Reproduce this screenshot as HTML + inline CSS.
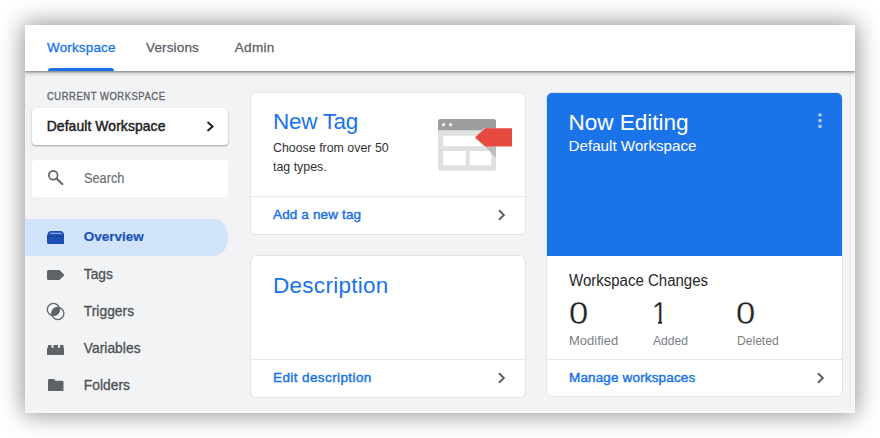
<!DOCTYPE html>
<html><head><meta charset="utf-8">
<style>
*{box-sizing:border-box;margin:0;padding:0}
html,body{width:880px;height:438px;background:#fff;overflow:hidden}
body{font-family:"Liberation Sans",sans-serif;position:relative}
#app{position:absolute;left:25px;top:25px;width:830px;height:388px;background:#f1f3f4;box-shadow:0 0 22px 2px rgba(0,0,0,.42);overflow:hidden}
#top{position:absolute;left:0;top:0;width:830px;height:45.5px;background:#fff;box-shadow:0 1px 2px rgba(0,0,0,.4),0 2px 6px rgba(0,0,0,.2);z-index:5}
.tab{position:absolute;top:15px;font-size:13.5px;color:#5f6368;letter-spacing:.15px;-webkit-text-stroke:.3px currentColor}
.tab.on{color:#1a73e8}
#ul{position:absolute;left:23px;top:42.900px;width:66px;height:2.900px;background:#1a73e8;border-radius:3px 3px 0 0}
.abs{position:absolute}
.card{position:absolute;background:#fff;border-radius:6px;border:1px solid #e2e3e4}
.lbl{position:absolute;left:22px;top:64.800px;font-size:10.5px;color:#5f6368;letter-spacing:.6px;-webkit-text-stroke:.3px currentColor;white-space:nowrap;transform:scaleX(.9);transform-origin:0 0}
#ws{position:absolute;left:7px;top:83px;width:196px;height:37px;background:#fff;border-radius:4px;box-shadow:0 1px 2px rgba(0,0,0,.35)}
#ws span{position:absolute;left:14.700px;top:9.5px;letter-spacing:.1px;font-size:13.9px;color:#202124;-webkit-text-stroke:.45px currentColor;white-space:nowrap}
#search{position:absolute;left:7px;top:135px;width:196px;height:37px;background:#fff;border-radius:4px}
#search span{position:absolute;left:51.500px;top:10px;font-size:14px;color:#6b6f73;transform:scaleX(.91);transform-origin:0 0;-webkit-text-stroke:.2px currentColor}
#sel{position:absolute;left:0;top:193.700px;width:203.200px;height:37px;background:#d2e3fc;border-radius:0 14px 14px 0 / 0 18.500px 18.500px 0}
.nav{position:absolute;left:58.700px;font-size:13.800px;color:#4d5155;-webkit-text-stroke:.3px currentColor;letter-spacing:.05px}
.nav.on{color:#1b55b8;font-weight:bold;font-size:13.5px;-webkit-text-stroke:.2px currentColor;letter-spacing:0}
.h{position:absolute;font-size:22.500px;color:#1a73e8;letter-spacing:-.3px;white-space:nowrap}
.link{position:absolute;font-size:13.5px;color:#1a73e8;-webkit-text-stroke:.45px currentColor;letter-spacing:.15px;white-space:nowrap}
.sep{position:absolute;left:0;right:0;height:1px;background:#e5e6e7}
.num{position:absolute;top:201.500px;font-size:31.500px;color:#202124;transform-origin:0 0;-webkit-text-stroke:.3px #fff}
.z{transform:scaleX(1.1)}
.sm{position:absolute;top:240.300px;transform-origin:0 0;font-size:13px;color:#7b8085}
</style></head><body>
<div id="app">
  <div id="top">
    <div class="tab on" style="left:22px">Workspace</div>
    <div class="tab" style="left:121px">Versions</div>
    <div class="tab" style="left:209.700px;letter-spacing:.35px">Admin</div>
    <div id="ul"></div>
  </div>
  <div class="abs" style="left:824.500px;top:46px;width:5.500px;height:342px;background:#f5f6f7;border-left:1px solid #eaebec"></div>
  <div class="abs" style="left:0;top:385.500px;width:830px;height:2.500px;background:#f5f6f6"></div>
  <div class="lbl">CURRENT WORKSPACE</div>
  <div id="ws"><span>Default Workspace</span>
    <svg class="abs" style="left:172.500px;top:12px" width="10" height="13" viewBox="0 0 10 13"><path d="M2.5 2 L7.5 6.5 L2.5 11" fill="none" stroke="#202124" stroke-width="2"/></svg>
  </div>
  <div id="search"><span>Search</span>
    <svg class="abs" style="left:15px;top:9px" width="18" height="18" viewBox="0 0 18 18"><circle cx="6.200" cy="6.300" r="4.400" fill="none" stroke="#5f6368" stroke-width="1.700"/><path d="M9.500 9.500 L16 15.800" stroke="#5f6368" stroke-width="1.900"/></svg>
  </div>
  <div id="sel"></div>
  <div class="nav on" style="top:203.800px">Overview</div>
  <div class="nav" style="top:242px">Tags</div>
  <div class="nav" style="top:279px">Triggers</div>
  <div class="nav" style="top:316px">Variables</div>
  <div class="nav" style="top:353px">Folders</div>
  <!-- icons -->
  <svg class="abs" style="left:21.800px;top:206px" width="17.500" height="13" viewBox="0 0 17.500 13"><path d="M3.500 0h10.500a2.500 2.500 0 0 1 2.300 1.600l1.200 3V11.500a1.500 1.500 0 0 1-1.500 1.500H1.500A1.500 1.500 0 0 1 0 11.500V4.600l1.200-3A2.500 2.500 0 0 1 3.500 0z" fill="#1b4fb3"/><path d="M3.500 2.300h10.500" stroke="#a9c4f5" stroke-width="1" stroke-linecap="round"/><path d="M0.500 5.400h16.500" stroke="#153f94" stroke-width="1"/></svg>
  <svg class="abs" style="left:21.500px;top:245px" width="17.500" height="10" viewBox="0 0 17.500 10"><path d="M1.500 0h11l5 5-5 5H1.500A1.500 1.500 0 0 1 0 8.500V1.500A1.500 1.500 0 0 1 1.500 0z" fill="#5f6368"/></svg>
  <svg class="abs" style="left:21px;top:277px" width="20" height="20" viewBox="0 0 20 20"><defs><clipPath id="c1"><circle cx="7.400" cy="7.500" r="6.100"/></clipPath></defs><circle cx="7.400" cy="7.500" r="6.100" fill="none" stroke="#5f6368" stroke-width="1.300"/><circle cx="11.800" cy="11.500" r="6.100" fill="none" stroke="#5f6368" stroke-width="1.300"/><circle cx="11.800" cy="11.500" r="6.100" fill="#5f6368" clip-path="url(#c1)"/></svg>
  <svg class="abs" style="left:21.800px;top:319.600px" width="17.500" height="10" viewBox="0 0 17.500 10"><path d="M0 10V2.800h1V0h3.500v2.800h2V0h4.500v2.800h2V0h3.500v2.800h1V10z" fill="#5f6368"/></svg>
  <svg class="abs" style="left:23.100px;top:354.300px" width="15.500" height="12.200" viewBox="0 0 15.500 12.200"><path d="M1.200 0h4.800l1.500 1.800h6.800A1.200 1.200 0 0 1 15.500 3v8a1.200 1.200 0 0 1-1.200 1.200H1.200A1.200 1.200 0 0 1 0 11V1.200A1.200 1.200 0 0 1 1.200 0z" fill="#5f6368"/></svg>

  <!-- New tag card -->
  <div class="card" style="left:224.500px;top:67px;width:276px;height:143px">
    <div class="h" style="left:22.500px;top:16px">New Tag</div>
    <div class="abs" style="left:22.500px;top:46px;font-size:12.400px;line-height:18.600px;color:#303336;white-space:nowrap">Choose from over 50<br>tag types.</div>
    <svg class="abs" style="left:187.300px;top:25.800px" width="76" height="54" viewBox="0 0 76 54">
      <rect x="0" y="0" width="58" height="51.800" rx="2.500" fill="#e0e0e0"/>
      <path d="M2.500 0h53a2.500 2.500 0 0 1 2.500 2.500v8.700H0V2.500a2.500 2.500 0 0 1 2.500-2.500z" fill="#9e9e9e"/>
      <circle cx="5.600" cy="5.700" r="1.700" fill="#f2f2f2"/><circle cx="12.600" cy="5.700" r="1.700" fill="#f2f2f2"/>
      <rect x="5.300" y="16.800" width="47.900" height="10.400" fill="#fff"/>
      <rect x="5.300" y="32" width="22.400" height="14.300" fill="#fff"/><rect x="31.700" y="32" width="21.500" height="14.300" fill="#fff"/>
      <path d="M47 27.600 L58 27.600 L58 39 z" fill="#bdbdbd"/>
      <path d="M46 9.300 L58 9.300 L58 27.600 L46 27.600 L36.500 18.400z" fill="#d4d4d4"/>
      <path d="M47.500 9.300 L74 9.300 L74 27.600 L47.500 27.600 L38.200 19.600 Q37 18.450 38.200 17.300z" fill="#e5493f"/>
    </svg>
    <div class="sep" style="top:103px"></div>
    <div class="link" style="left:22.500px;top:113.500px">Add a new tag</div>
    <svg class="abs" style="left:246.500px;top:115.500px" width="9" height="12" viewBox="0 0 9 12"><path d="M2 1.300 L6.800 6 L2 10.700" fill="none" stroke="#5f6368" stroke-width="2"/></svg>
  </div>
  <!-- Description card -->
  <div class="card" style="left:224.500px;top:230px;width:276px;height:142.600px">
    <div class="h" style="left:22.500px;top:16.800px;letter-spacing:.28px">Description</div>
    <div class="sep" style="top:103px"></div>
    <div class="link" style="left:22.500px;top:113.500px;letter-spacing:.4px">Edit description</div>
    <svg class="abs" style="left:246.500px;top:115.500px" width="9" height="12" viewBox="0 0 9 12"><path d="M2 1.300 L6.800 6 L2 10.700" fill="none" stroke="#5f6368" stroke-width="2"/></svg>
  </div>
  <!-- Now editing -->
  <div class="card" style="left:521px;top:67px;width:297px;height:305px;overflow:hidden">
    <div class="abs" style="left:-1px;top:-1px;width:297px;height:163.500px;background:#1a73e8"></div>
    <div class="abs" style="left:21.500px;top:17px;font-size:22.600px;color:#fff;letter-spacing:-.05px;white-space:nowrap">Now Editing</div>
    <div class="abs" style="left:21.500px;top:44.200px;font-size:15.200px;color:#fff;white-space:nowrap">Default Workspace</div>
    <svg class="abs" style="left:271px;top:19.600px" width="4" height="16" viewBox="0 0 4 16"><rect x=".3" y=".4" width="3.400" height="3.200" rx="1.300" fill="#b5cff9"/><rect x=".3" y="6.100" width="3.400" height="3.200" rx="1.300" fill="#b5cff9"/><rect x=".3" y="11.800" width="3.400" height="3.200" rx="1.300" fill="#b5cff9"/></svg>
    <div class="abs" style="left:22px;top:179px;font-size:16px;color:#26282b;white-space:nowrap;transform:scaleX(.938);transform-origin:0 0">Workspace Changes</div>
    <div class="num z" style="left:21.500px">0</div>
    <div class="num" style="left:104.500px;transform:scaleX(.88)">1</div>
    <div class="num z" style="left:189px">0</div>
    <div class="abs" style="left:104px;top:227.400px;width:7.300px;height:4.500px;background:#fff"></div><div class="abs" style="left:115px;top:227.400px;width:7px;height:4.500px;background:#fff"></div>
    <div class="sm" style="left:22px">Modified</div>
    <div class="sm" style="left:105.800px;transform:scaleX(.93)">Added</div>
    <div class="sm" style="left:189.500px;transform:scaleX(.93)">Deleted</div>
    <div class="sep" style="top:266px"></div>
    <div class="link" style="left:22px;top:276.500px">Manage workspaces</div>
    <svg class="abs" style="left:268.700px;top:278.500px" width="9" height="12" viewBox="0 0 9 12"><path d="M2 1.300 L6.800 6 L2 10.700" fill="none" stroke="#5f6368" stroke-width="2"/></svg>
  </div>
</div>
</body></html>
